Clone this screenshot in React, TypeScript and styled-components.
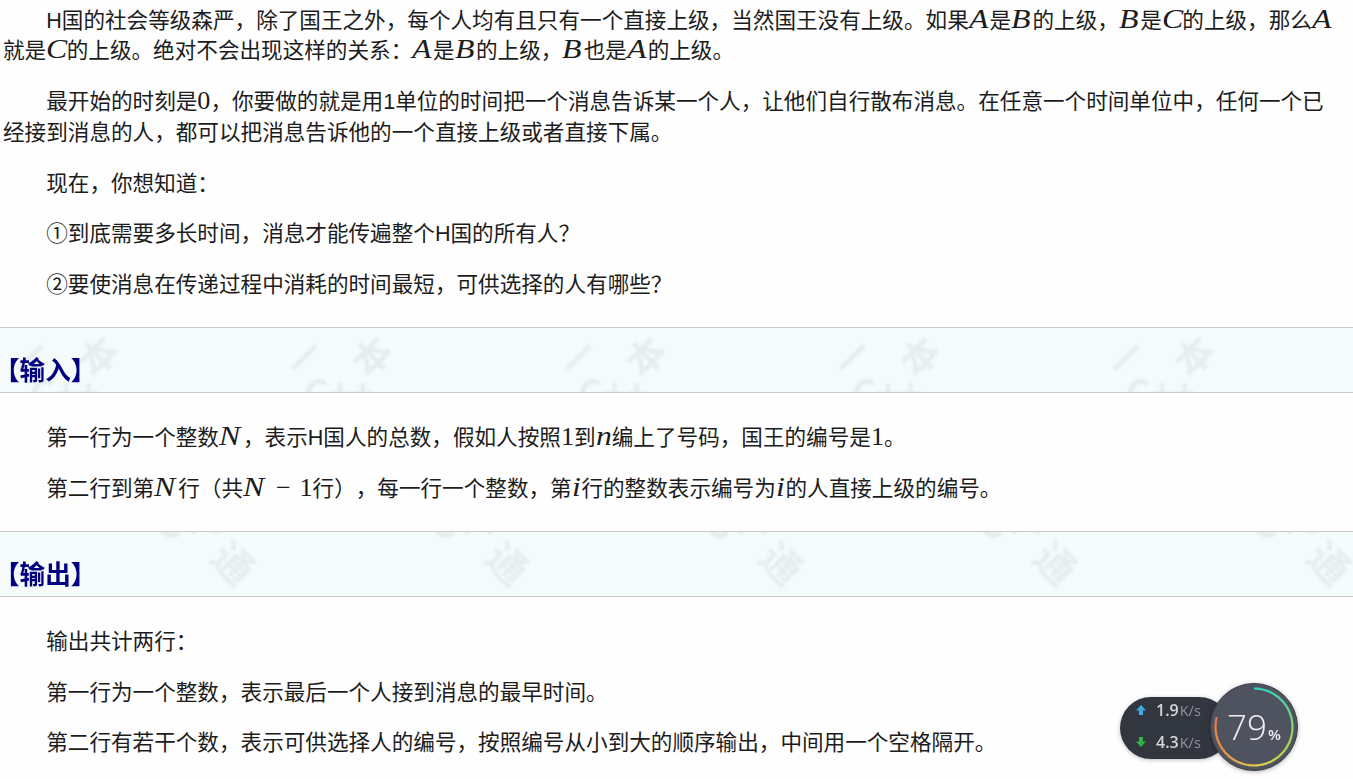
import styled, { createGlobalStyle } from "styled-components";
import { ReactNode } from "react";

const GlobalStyle = createGlobalStyle`
    html, body {
        margin: 0;
        height: 779px;
        overflow: hidden;
        background: #fefefe;
    }
`;

const Page = styled.div`
    padding: 6px 12px 0 3px;
    font-family: "Liberation Sans", "Noto Sans CJK SC", sans-serif;
    font-size: 21.6px;
    line-height: 30.47px;
    color: #1c1c1c;
    text-spacing-trim: space-all;
`;

const Para = styled.p`
    margin: 0 0 20.33px;
    text-indent: 2em;
`;

const Heading = styled.h2`
    position: relative;
    overflow: hidden;
    box-sizing: border-box;
    display: flex;
    align-items: flex-end;
    height: 66px;
    padding: 0 0 7px;
    margin: 26.5px -12px 30px -3px;
    border-top: 1px solid #c4c9cc;
    border-bottom: 1px solid #c4c9cc;
    background: #f5fbfb;
`;

const HeadingText = styled.span`
    position: relative;
    margin-left: -6px;
    font-size: 25.6px;
    line-height: 32px;
    font-weight: 700;
    color: #000080;
    font-family: "Noto Sans CJK SC", sans-serif;
`;

const MathLetter = styled.span<{ $w: number }>`
    display: inline-block;
    width: ${(p) => p.$w}em;
    text-indent: 0;
    font-family: "Liberation Serif", serif;
    font-style: italic;
    font-size: 1.25em;
    line-height: 0;
    transform: scaleX(1.18);
    transform-origin: left;
`;

const Mn = styled.span`
    font-family: "Liberation Serif", serif;
    font-size: 1.21em;
    line-height: 0;
`;

const Minus = styled(Mn)`
    margin: 0 0.34em;
`;

const letterWidths: Record<string, number> = { A: 0.77, B: 0.79, C: 0.76, N: 0.89, n: 0.6, i: 0.36 };

function Mi({ children }: { children: string }) {
    return <MathLetter $w={letterWidths[children]}>{children}</MathLetter>;
}

const MarkRow = styled.div`
    position: absolute;
    inset: 0;
    display: flex;
    filter: blur(1px);
`;

const Tile = styled.div`
    position: relative;
    flex: 0 0 274px;
`;

const Glyph = styled.span<{ $x: number; $y: number; $size: number; $turn: number }>`
    position: absolute;
    left: ${(p) => p.$x}px;
    top: ${(p) => p.$y}px;
    font-size: ${(p) => p.$size}px;
    line-height: 1;
    font-weight: 700;
    white-space: nowrap;
    color: rgba(40, 60, 60, 0.07);
    transform: translate(-50%, -50%) rotate(${(p) => p.$turn}deg);
    font-family: "Noto Sans CJK SC", sans-serif;
`;

const Widget = styled.div`
    position: fixed;
    left: 1120px;
    top: 683px;
    display: flex;
    align-items: center;
    filter: blur(0.5px);
    font-family: "Open Sans", "Liberation Sans", sans-serif;
`;

const Pill = styled.div`
    width: 110px;
    height: 62px;
    margin-top: 2px;
    border-radius: 31px;
    background: #32363f;
    box-shadow: 0 1px 4px rgba(0, 0, 0, 0.25);
    display: flex;
    flex-direction: column;
    justify-content: center;
    gap: 10px;
    padding: 0 0 4px 15px;
    box-sizing: border-box;
`;

const Rate = styled.div`
    display: flex;
    align-items: baseline;
    gap: 1px;
    height: 22px;
    line-height: 22px;
    font-size: 16px;
    font-weight: 600;
    color: #d4d6da;
`;

const RateIcon = styled.svg`
    width: 12px;
    height: 12px;
    margin-right: 8px;
    align-self: center;
`;

const Unit = styled.span`
    font-size: 14.5px;
    font-weight: 400;
    color: #8f939b;
`;

const Dial = styled.div`
    position: relative;
    width: 88px;
    height: 88px;
    margin-left: -20px;
    border-radius: 50%;
    background: #4f535f;
    border: 1px solid #3a3e48;
    box-sizing: border-box;
    box-shadow: 0 1px 4px rgba(0, 0, 0, 0.3);
    display: flex;
    align-items: baseline;
    justify-content: center;
    color: #eceef0;
    font-size: 35px;
    font-weight: 300;
    line-height: 86px;
`;

const DialRing = styled.svg`
    position: absolute;
    inset: -1px;
    width: 88px;
    height: 88px;
`;

const Percent = styled.span`
    font-size: 15px;
    font-weight: 600;
    margin-left: 1px;
`;

const ringStops = [
    [47, 212, 190],
    [90, 214, 150],
    [170, 214, 90],
    [226, 208, 70],
    [236, 150, 70],
    [232, 120, 70],
];

function ringColor(t: number) {
    const pos = t * (ringStops.length - 1);
    const i = Math.min(Math.floor(pos), ringStops.length - 2);
    const f = pos - i;
    const c = ringStops[i].map((v, k) => Math.round(v + (ringStops[i + 1][k] - v) * f));
    return `rgb(${c[0]},${c[1]},${c[2]})`;
}

function Ring() {
    const n = 60;
    const r = 38.5;
    const pt = (t: number) => {
        const a = (t * 0.79 * 360 - 90) * (Math.PI / 180);
        return `${(44 + r * Math.cos(a)).toFixed(2)} ${(44 + r * Math.sin(a)).toFixed(2)}`;
    };
    return (
        <DialRing viewBox="0 0 88 88">
            {Array.from({ length: n }, (_, i) => (
                <path
                    key={i}
                    d={`M${pt(i / n)} L${pt((i + 1.1) / n)}`}
                    stroke={ringColor(i / n)}
                    strokeWidth="2.2"
                    fill="none"
                />
            ))}
        </DialRing>
    );
}

function Marks({ children }: { children: ReactNode }) {
    return (
        <MarkRow>
            {[0, 1, 2, 3, 4].map((i) => (
                <Tile key={i}>{children}</Tile>
            ))}
        </MarkRow>
    );
}

function Section({ title, children }: { title: string; children: ReactNode }) {
    return (
        <Heading>
            <Marks>{children}</Marks>
            <HeadingText>{title}</HeadingText>
        </Heading>
    );
}

export default function App() {
    return (
        <>
            <GlobalStyle />
            <Page>
                <Para>
                    H国的社会等级森严，除了国王之外，每个人均有且只有一个直接上级，当然国王没有上级。如果<Mi>A</Mi>是<Mi>B</Mi>的上级，<Mi>B</Mi>是<Mi>C</Mi>的上级，那么<Mi>A</Mi>就是<Mi>C</Mi>的上级。绝对不会出现这样的关系：<Mi>A</Mi>是<Mi>B</Mi>的上级，<Mi>B</Mi>也是<Mi>A</Mi>的上级。
                </Para>
                <Para>
                    最开始的时刻是<Mn>0</Mn>，你要做的就是用1单位的时间把一个消息告诉某一个人，让他们自行散布消息。在任意一个时间单位中，任何一个已经接到消息的人，都可以把消息告诉他的一个直接上级或者直接下属。
                </Para>
                <Para>现在，你想知道：</Para>
                <Para>①到底需要多长时间，消息才能传遍整个H国的所有人？</Para>
                <Para>②要使消息在传递过程中消耗的时间最短，可供选择的人有哪些？</Para>

                <Section title="【输入】">
                    <Glyph $x={29} $y={28} $size={36} $turn={-45}>一</Glyph>
                    <Glyph $x={97} $y={27} $size={38} $turn={-45}>本</Glyph>
                    <Glyph $x={65} $y={63} $size={38} $turn={0}>C++</Glyph>
                </Section>

                <Para>
                    第一行为一个整数<Mi>N</Mi>，表示H国人的总数，假如人按照<Mn>1</Mn>到<Mi>n</Mi>编上了号码，国王的编号是<Mn>1</Mn>。
                </Para>
                <Para>
                    第二行到第<Mi>N</Mi>行（共<Mi>N</Mi><Minus>−</Minus><Mn>1</Mn>行），每一行一个整数，第<Mi>i</Mi>行的整数表示编号为<Mi>i</Mi>的人直接上级的编号。
                </Para>

                <Section title="【输出】">
                    <Glyph $x={235} $y={30} $size={40} $turn={45}>通</Glyph>
                    <Glyph $x={192} $y={-10} $size={38} $turn={0}>C++</Glyph>
                </Section>

                <Para>输出共计两行：</Para>
                <Para>第一行为一个整数，表示最后一个人接到消息的最早时间。</Para>
                <Para>第二行有若干个数，表示可供选择人的编号，按照编号从小到大的顺序输出，中间用一个空格隔开。</Para>
            </Page>

            <Widget>
                <Pill>
                    <Rate>
                        <RateIcon viewBox="0 0 12 12">
                            <path d="M6 1 L11 6.5 H8 V11 H4 V6.5 H1 Z" fill="#3fa9e8" />
                        </RateIcon>
                        1.9<Unit>K/s</Unit>
                    </Rate>
                    <Rate>
                        <RateIcon viewBox="0 0 12 12">
                            <path d="M6 11 L1 5.5 H4 V1 H8 V5.5 H11 Z" fill="#2fb344" />
                        </RateIcon>
                        4.3<Unit>K/s</Unit>
                    </Rate>
                </Pill>
                <Dial>
                    <Ring />
                    79<Percent>%</Percent>
                </Dial>
            </Widget>
        </>
    );
}
